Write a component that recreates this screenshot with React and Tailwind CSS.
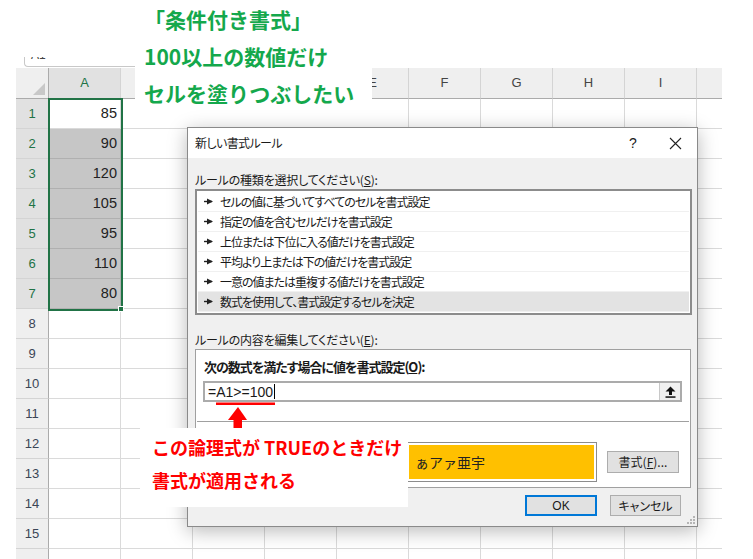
import React from 'react';

const COLS = ['A', 'B', 'C', 'D', 'E', 'F', 'G', 'H', 'I'];
// B〜D are hidden under the note box in the picture
const HIDDEN_LABELS = ['B', 'C', 'D'];
const VALUES = [85, 90, 120, 105, 95, 110, 80];
const RULES = [
  'セルの値に基づいてすべてのセルを書式設定',
  '指定の値を含むセルだけを書式設定',
  '上位または下位に入る値だけを書式設定',
  '平均より上または下の値だけを書式設定',
  '一意の値または重複する値だけを書式設定',
  '数式を使用して、書式設定するセルを決定',
];

const RuleArrow = () => (
  <svg width="10" height="7" viewBox="0 0 10 7" className="shrink-0">
    <rect x="0" y="2.8" width="8" height="1.4" fill="#222" />
    <polygon points="3,0.5 9,3.5 3,6.5" fill="#222" />
  </svg>
);

const Sheet = () => (
  <div className="pl-[16px] pt-[57px] w-[753px] font-['Liberation_Sans',sans-serif]">
    {/* name box strip */}
    <div className="h-[11px] w-[706px] flex">
      <div className="ml-[8px] w-[111px] h-[10px] bg-white border-l border-b border-[#c8c8c8] rounded-bl-[4px] overflow-hidden">
        <div className="-mt-[9px] pl-[6px] text-[12px] leading-[14px] text-[#444]">A1</div>
      </div>
    </div>

    {/* column headers */}
    <div className="flex h-[31px]">
      <div className="w-[33px] h-full bg-[#efefef] border-r border-b border-[#ababab] flex items-end justify-end p-[3px]">
        <svg width="12" height="12" viewBox="0 0 12 12">
          <polygon points="12,0 12,12 0,12" fill="#c8c8c8" />
        </svg>
      </div>
      {COLS.map((c) => (
        <div
          key={c}
          className={`w-[72px] h-full border-r border-b border-b-[#ababab] border-r-[#d4d4d4] flex items-center justify-center text-[13px] ${
            c === 'A' ? 'bg-[#e1e1e1] text-[#217346]' : 'bg-[#efefef] text-[#444]'
          }`}
        >
          {HIDDEN_LABELS.includes(c) ? '' : c}
        </div>
      ))}
      <div className="w-[25px] h-full bg-[#efefef] border-b border-[#ababab]" />
    </div>

    {/* rows */}
    {Array.from({ length: 16 }, (_, i) => {
      const n = i + 1;
      const v = VALUES[i];
      const selected = n <= 7;
      return (
        <div key={n} className="flex h-[30px]">
          <div
            className={`w-[33px] h-full border-r border-r-[#ababab] border-b border-b-[#d4d4d4] flex items-center justify-center text-[13px] ${
              selected ? 'bg-[#e1e1e1] text-[#217346]' : 'bg-[#efefef] text-[#3b4556]'
            }`}
          >
            {n <= 15 ? n : ''}
          </div>
          <div
            className={`w-[72px] h-full border-r border-b flex items-center justify-end pr-[3px] text-[14.5px] text-[#222] ${
              n >= 2 && n <= 7 ? 'bg-[#c6c6c6] border-[#b0b0b0]' : 'bg-white border-[#dadada]'
            }`}
          >
            {v}
          </div>
          {COLS.slice(1).map((c) => (
            <div key={c} className="w-[72px] h-full border-r border-b border-[#dadada]" />
          ))}
          <div className="w-[25px] h-full border-b border-[#dadada]" />
        </div>
      );
    })}
  </div>
);

const Dialog = () => (
  <div className="absolute left-[187px] top-[127px] w-[511px] h-[400px] border border-[#8a8a8a] bg-[#f0f0f0] shadow-[0_4px_18px_rgba(0,0,0,0.28)] flex flex-col text-[#1a1a1a] font-['Noto_Sans_CJK_JP','Noto_Sans',sans-serif] [font-feature-settings:'palt']">
    {/* title bar */}
    <div className="h-[30px] bg-white flex items-center pl-[7px] pr-[15px] text-[12px]">
      <span className="tracking-[-0.6px]">新しい書式ルール</span>
      <span className="ml-auto w-[10px] text-center text-[14px] font-['Liberation_Sans',sans-serif]">?</span>
      <span className="ml-[30px] w-[14px] flex justify-center">
        <svg width="13" height="13" viewBox="0 0 13 13">
          <path d="M1 1 L12 12 M12 1 L1 12" stroke="#222" strokeWidth="1.1" />
        </svg>
      </span>
    </div>

    {/* body */}
    <div className="flex-1 pl-[7px] pr-[5px] pt-[13px] flex flex-col relative">
      <div className="h-[18px] leading-[18px] text-[12px] tracking-[-0.2px]">
        ルールの種類を選択してください(<span className="underline">S</span>):
      </div>

      <div className="h-[126px] border-2 border-[#8c8c8c] bg-white pt-[1px] px-[1px]">
        {RULES.map((r, i) => (
          <div
            key={r}
            className={`h-[20px] flex items-center gap-[6px] pl-[6px] text-[12px] border-b border-[#f0f0f0] ${
              i === 5 ? 'bg-[#e3e3e3]' : ''
            }`}
          >
            <RuleArrow />
            <span className="tracking-[-1px]">{r}</span>
          </div>
        ))}
      </div>

      <div className="mt-[16px] h-[18px] leading-[18px] text-[12px] tracking-[-0.2px]">
        ルールの内容を編集してください(<span className="underline">E</span>):
      </div>

      <div className="h-[139px] mr-[1px] border border-[#a0a0a0] bg-white flex flex-col">
        <div className="mt-[8px] ml-[8px] h-[18px] leading-[18px] text-[13px] font-bold tracking-[-1px]">
          次の数式を満たす場合に値を書式設定(<span className="underline">O</span>):
        </div>
        <div className="mt-[5px] ml-[7px] mr-[8px] h-[21px] border-2 border-[#ababab] flex">
          <div className="flex-1 flex items-center pl-[3px] text-[14px] leading-none font-['Liberation_Sans',sans-serif]">
            <span>=A1&gt;=100</span>
            <span className="ml-[1px] w-[1px] h-[15px] bg-black" />
          </div>
          <div className="w-[21px] h-full border-l border-[#c8c8c8] bg-[#f0f0f0] flex items-center justify-center">
            <svg width="11" height="12" viewBox="0 0 11 12">
              <polygon points="5.5,0.5 10.5,5.5 7,5.5 7,9 4,9 4,5.5 0.5,5.5" fill="#111" />
              <rect x="0.5" y="10.3" width="10" height="1.5" fill="#111" />
            </svg>
          </div>
        </div>
        <div className="mt-[19px] mx-[1px] h-[1px] bg-[#a0a0a0]" />
        <div className="mt-[20px] h-[40px] flex items-center justify-end pr-[11px]">
          <div className="w-[191px] h-[40px] border border-[#8c8c8c] bg-white p-[2px]">
            <div className="w-full h-full bg-[#ffc000] flex items-center pl-[6px] text-[14px] text-[#222] [font-feature-settings:normal]">
              ぁアァ亜宇
            </div>
          </div>
          <div className="ml-[10px] w-[72px] h-[22px] border border-[#adadad] bg-[#e1e1e1] flex items-center justify-center text-[12px]">
            書式(<span className="underline">F</span>)...
          </div>
        </div>
      </div>

      <div className="mt-[7px] flex justify-end gap-[13px] pr-[11px]">
        <div className="w-[72px] h-[21px] border-2 border-[#0078d7] bg-[#e1e1e1] flex items-center justify-center text-[12px] font-['Liberation_Sans',sans-serif]">
          OK
        </div>
        <div className="w-[71px] h-[21px] border border-[#adadad] bg-[#e1e1e1] flex items-center justify-center text-[12px]">
          キャンセル
        </div>
      </div>

      {/* resize grip */}
      <svg width="10" height="10" viewBox="0 0 10 10" className="absolute right-[1px] bottom-[1px]">
        <rect x="7" y="1" width="2" height="2" fill="#b5b5b5" />
        <rect x="4" y="4" width="2" height="2" fill="#b5b5b5" />
        <rect x="7" y="4" width="2" height="2" fill="#b5b5b5" />
        <rect x="1" y="7" width="2" height="2" fill="#b5b5b5" />
        <rect x="4" y="7" width="2" height="2" fill="#b5b5b5" />
        <rect x="7" y="7" width="2" height="2" fill="#b5b5b5" />
      </svg>
    </div>
  </div>
);

export default function App() {
  return (
    <div className="relative w-[753px] h-[559px] overflow-hidden bg-white">
      <Sheet />

      {/* selection border around A1:A7 */}
      <div className="absolute left-[48px] top-[98px] w-[75px] h-[213px] border-2 border-[#217346]" />
      <div className="absolute left-[118px] top-[306px] w-[6px] h-[6px] bg-[#217346] border border-white" />

      {/* green note */}
      <div className="absolute left-[135px] top-0 w-[237px] h-[128px] bg-white pl-[9px] pt-[1px] text-[21px] leading-[37px] font-bold text-[#14a84c] font-['Noto_Sans_CJK_JP',sans-serif]">
        <div>「条件付き書式」</div>
        <div>100以上の数値だけ</div>
        <div>セルを塗りつぶしたい</div>
      </div>

      <Dialog />

      {/* red underline and arrow */}
      <svg className="absolute left-0 top-0" width="753" height="559" viewBox="0 0 753 559">
        <rect x="216" y="402.5" width="59" height="2.5" fill="#ff0000" />
        <polygon points="238,407 228,420 247,420" fill="#ff0000" />
        <rect x="233.5" y="419" width="8.5" height="12" fill="#ff0000" />
      </svg>

      {/* red callout */}
      <div className="absolute left-[140px] top-[428px] w-[268px] h-[79px] bg-white pl-[12px] pt-[3px] text-[18px] leading-[33px] font-bold text-[#ff0000] font-['Noto_Sans_CJK_JP',sans-serif]">
        <div>この論理式が TRUEのときだけ</div>
        <div>書式が適用される</div>
      </div>
    </div>
  );
}
